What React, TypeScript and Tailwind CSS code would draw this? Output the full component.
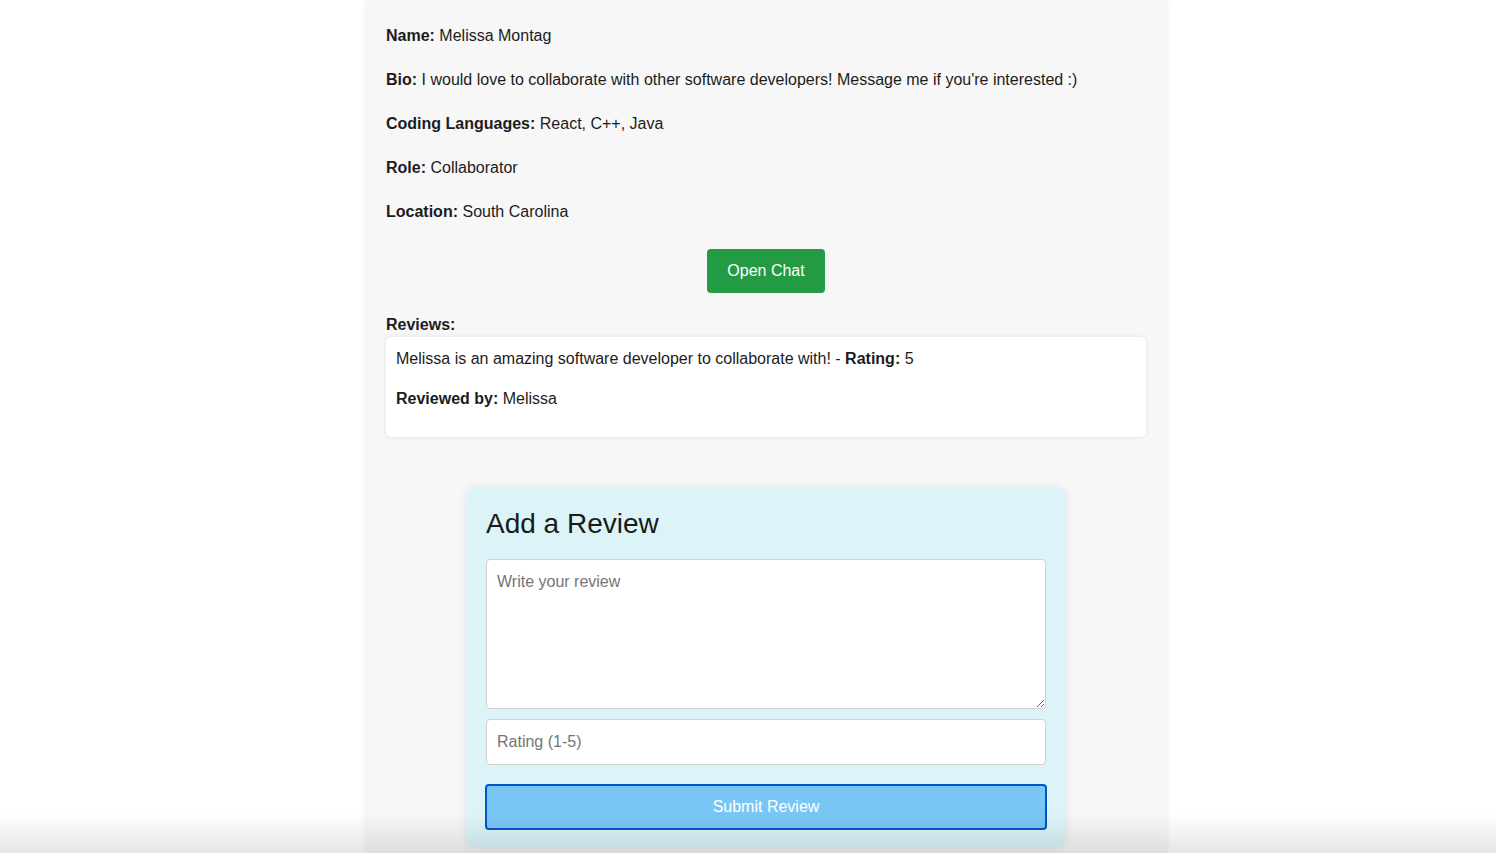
import React, { useState } from "react";

const font = { fontFamily: '"Liberation Sans", Arial, sans-serif' };

function Field({ label, value }: { label: string; value: string }) {
  return (
    <p className="h-[18px] leading-[18px]">
      <strong className="font-bold">{label}</strong> {value}
    </p>
  );
}

export default function App() {
  const [review, setReview] = useState("");
  const [rating, setRating] = useState("");

  return (
    <div style={font} className="relative min-h-[853px] bg-white text-[16px] text-[#1c1c1c]">
      <div className="ml-[366px] flex min-h-[853px] w-[800px] flex-col bg-[#f7f7f7] px-5 pt-[27px] shadow-[0_0_6px_rgba(0,0,0,0.08)]">
        <div className="flex flex-col gap-[26px]">
          <Field label="Name:" value="Melissa Montag" />
          <Field label="Bio:" value="I would love to collaborate with other software developers! Message me if you're interested :)" />
          <Field label="Coding Languages:" value="React, C++, Java" />
          <Field label="Role:" value="Collaborator" />
          <Field label="Location:" value="South Carolina" />
        </div>

        <div className="mt-[28px] flex justify-center">
          <button className="h-[44px] w-[118px] rounded-[4px] bg-[#229b44] text-white">Open Chat</button>
        </div>

        <p className="mt-[23px] h-[18px] font-bold leading-[18px]">Reviews:</p>
        <div className="mt-[3px] flex h-[100px] flex-col gap-[22px] rounded-[5px] bg-white px-[10px] pt-[13px] shadow-[0_0_4px_rgba(0,0,0,0.1)]">
          <p className="leading-[18px]">
            Melissa is an amazing software developer to collaborate with! - <strong>Rating:</strong> 5
          </p>
          <p className="leading-[18px]">
            <strong>Reviewed by:</strong> Melissa
          </p>
        </div>

        <form
          onSubmit={(e) => e.preventDefault()}
          className="mx-auto mt-[50px] flex w-[600px] flex-col rounded-[10px] bg-[#dcf4f8] px-5 pb-[18px] pt-[20px] shadow-[0_0_8px_rgba(0,0,0,0.08)]"
        >
          <h2 className="text-[28px] leading-[34px] text-[#1a1a1a]">Add a Review</h2>
          <textarea
            value={review}
            onChange={(e) => setReview(e.target.value)}
            placeholder="Write your review"
            className="mt-[18px] h-[150px] w-full resize-y rounded-[4px] border border-[#d0d0d0] bg-white px-[10px] pb-[11px] pt-[13px] leading-[18px] outline-none placeholder:text-[#757575]"
          />
          <input
            value={rating}
            onChange={(e) => setRating(e.target.value)}
            placeholder="Rating (1-5)"
            className="mt-[10px] h-[46px] w-full rounded-[4px] border border-[#d0d0d0] bg-white px-[10px] outline-none placeholder:text-[#757575]"
          />
          <button className="mx-[-1px] mt-[19px] h-[46px] rounded-[4px] border-2 border-[#0057c6] bg-[#79c6f5] text-white">
            Submit Review
          </button>
        </form>
      </div>
      <div className="pointer-events-none fixed inset-x-0 bottom-0 h-[40px] bg-gradient-to-b from-transparent to-black/10" />
    </div>
  );
}
